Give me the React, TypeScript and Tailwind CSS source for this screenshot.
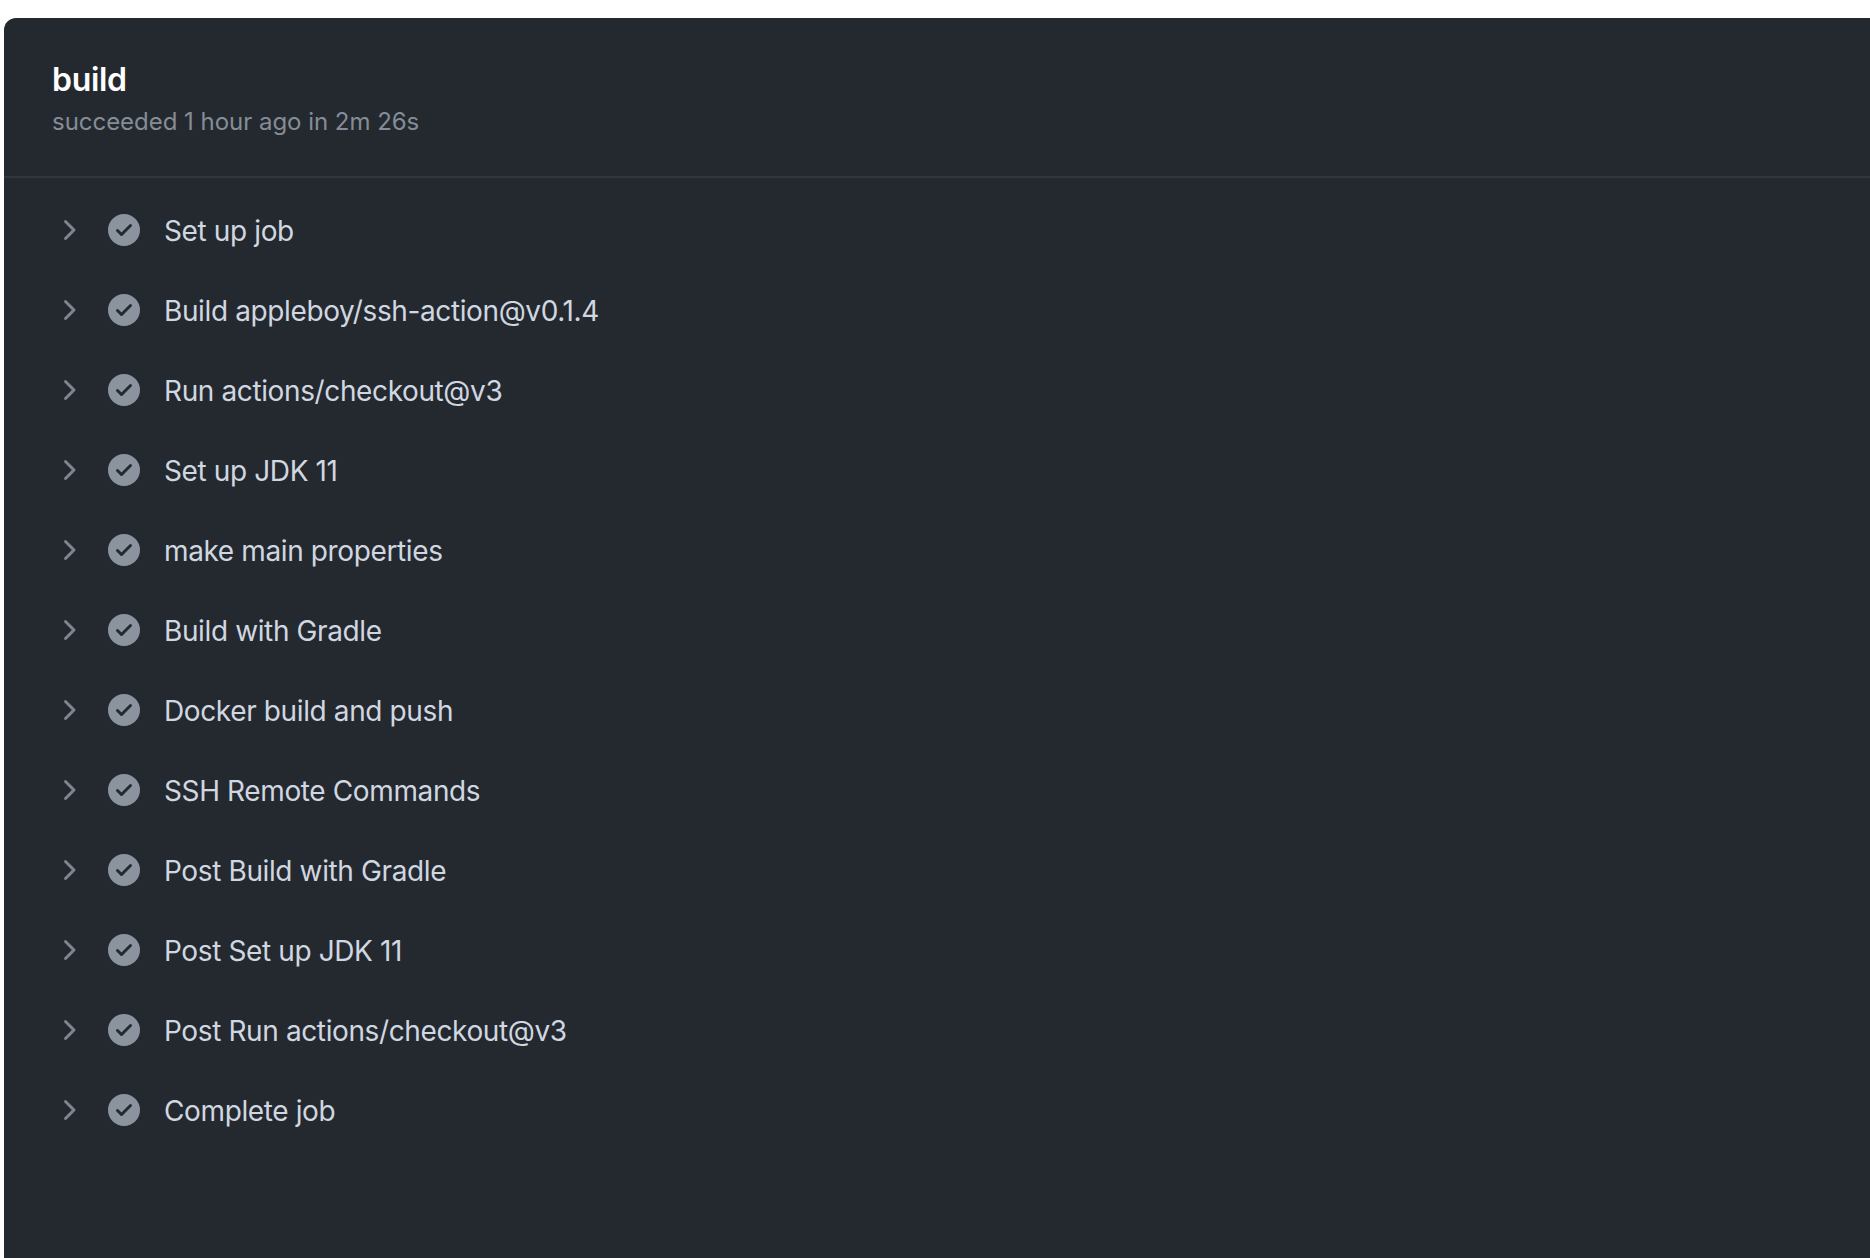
const steps = [
  "Set up job",
  "Build appleboy/ssh-action@v0.1.4",
  "Run actions/checkout@v3",
  "Set up JDK 11",
  "make main properties",
  "Build with Gradle",
  "Docker build and push",
  "SSH Remote Commands",
  "Post Build with Gradle",
  "Post Set up JDK 11",
  "Post Run actions/checkout@v3",
  "Complete job",
];

function ChevronIcon() {
  return (
    <svg viewBox="0 0 16 16" className="h-8 w-8 shrink-0 fill-[#7d8590]">
      <path d="M6.22 3.22a.75.75 0 0 1 1.06 0l4.25 4.25a.75.75 0 0 1 0 1.06l-4.25 4.25a.751.751 0 0 1-1.042-.018.751.751 0 0 1-.018-1.042L9.94 8 6.22 4.28a.75.75 0 0 1 0-1.06Z" />
    </svg>
  );
}

function CheckIcon() {
  return (
    <svg viewBox="0 0 16 16" className="h-8 w-8 shrink-0 fill-[#8b949e]">
      <path d="M8 16A8 8 0 1 1 8 0a8 8 0 0 1 0 16Zm3.78-9.72a.751.751 0 0 0-.018-1.042.751.751 0 0 0-1.042-.018L6.75 9.19 5.28 7.72a.751.751 0 0 0-1.042.018.751.751 0 0 0-.018 1.042l2 2a.75.75 0 0 0 1.06 0Z" />
    </svg>
  );
}

export default function App() {
  return (
    <div className="h-[1258px] overflow-hidden bg-white pl-1 pt-[18px] font-['Inter',sans-serif]">
      <div className="h-full rounded-tl-xl bg-[#24292f]">
        <div className="h-[160px] border-b-2 border-[#30363d] pl-[48px] pt-[42px]">
          <h1 className="text-[32px] leading-[40px] font-semibold tracking-[-0.3px] text-white">build</h1>
          <p className="mt-1 text-2xl leading-9 tracking-[-0.03px] text-[#848d97]">succeeded 1 hour ago in 2m 26s</p>
        </div>
        <ul className="pt-3">
          {steps.map((step) => (
            <li key={step} className="flex h-20 items-center gap-6 pl-12">
              <ChevronIcon />
              <CheckIcon />
              <span className="pt-px text-[28px] tracking-[-0.38px] text-[#d0d7e0]">{step}</span>
            </li>
          ))}
        </ul>
      </div>
    </div>
  );
}
